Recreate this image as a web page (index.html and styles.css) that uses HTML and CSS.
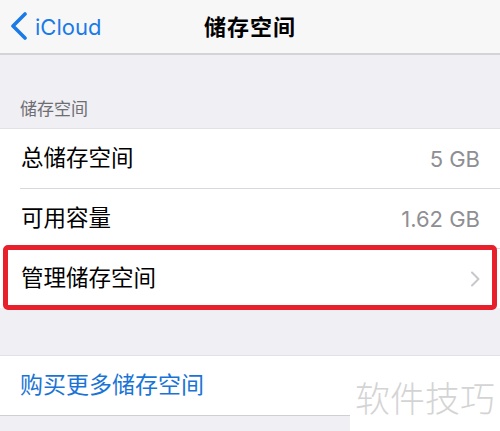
FILE: index.html
```html
<!DOCTYPE html>
<html lang="zh-CN">

<head>
  <meta charset="UTF-8">
  <meta name="viewport" content="width=device-width, initial-scale=1.0">
  <title>储存空间</title>
  <link rel="stylesheet" href="styles.css">
</head>

<body>
  <header class="navbar">
    <a class="back" href="#">
      <svg width="20" height="30" viewBox="0 0 20 30"><polyline points="16,2 4,14 16,26" fill="none" stroke="#1a7ae6" stroke-width="3.6" stroke-linecap="round" stroke-linejoin="round"/></svg>
      <span>iCloud</span>
    </a>
    <h1 class="title">储存空间</h1>
    <div></div>
  </header>

  <div class="section-head">储存空间</div>
  <ul class="group">
    <li class="row"><span>总储存空间</span><span class="value">5 GB</span></li>
    <li class="row"><span>可用容量</span><span class="value">1.62 GB</span></li>
    <li class="row mark">
      <span>管理储存空间</span>
      <svg class="chev" width="10" height="16" viewBox="0 0 10 16"><polyline points="2,1.5 8.5,8 2,14.5" fill="none" stroke="#c7c7cc" stroke-width="2" stroke-linecap="round" stroke-linejoin="round"/></svg>
      <div class="redbox"></div>
    </li>
  </ul>

  <ul class="group buy">
    <li class="row link">购买更多储存空间</li>
  </ul>

  <div class="watermark">软件技巧</div>
</body>

</html>
```

FILE: styles.css
```css
body {
  margin: 0;
  width: 500px;
  height: 431px;
  overflow: hidden;
  position: relative;
  background: #efeff4;
  font-family: Inter, "Noto Sans CJK SC", sans-serif;
  color: #000;
}

ul {
  list-style: none;
  margin: 0;
  padding: 0;
}

.navbar {
  height: 53px;
  display: grid;
  grid-template-columns: 1fr auto 1fr;
  align-items: center;
  background: #f7f7f8;
  border-bottom: 2px solid #d4d4d8;
}

.back {
  display: flex;
  align-items: center;
  gap: 6px;
  padding-left: 9px;
  color: #1a7ae6;
  text-decoration: none;
  font-size: 22px;
  line-height: 1;
}

.back svg {
  display: block;
}

.title {
  margin: 0;
  font-size: 22px;
  font-weight: 600;
  line-height: 1;
  letter-spacing: 1px;
}

.section-head {
  padding: 43px 0 0 20px;
  height: 30px;
  font-size: 17px;
  line-height: 22px;
  color: #6d6d72;
}

.group {
  background: #fff;
  border-top: 1px solid #e2e2e6;
}

.row {
  position: relative;
  height: 59px;
  display: flex;
  align-items: center;
  justify-content: space-between;
  margin-left: 20px;
  padding: 0 20px 0 1px;
  font-size: 22.5px;
  line-height: 1;
  border-bottom: 1px solid #d9d9dd;
}

.row:last-child {
  border-bottom: none;
}

.value {
  color: #8e8e93;
  font-size: 22px;
}

.chev {
  display: block;
}

.redbox {
  position: absolute;
  top: -4px;
  bottom: -2px;
  left: -17px;
  right: 3px;
  border: 5px solid #e8202c;
  border-radius: 5px;
}

.buy {
  margin-top: 47px;
  border-bottom: 1px solid #cfcfd3;
}

.link {
  margin-left: 0;
  padding-left: 20px;
  color: #1a74d6;
  height: 59px;
  font-size: 23px;
}

.watermark {
  position: absolute;
  right: 0;
  bottom: 0;
  width: 150px;
  height: 62px;
  background: #fff;
  color: #d4d4d4;
  font-size: 35px;
  line-height: 1;
  padding-left: 5px;
  box-sizing: border-box;
  padding-top: 10px;
  font-family: "Noto Sans CJK SC", sans-serif;
  font-weight: 300;
}
```
